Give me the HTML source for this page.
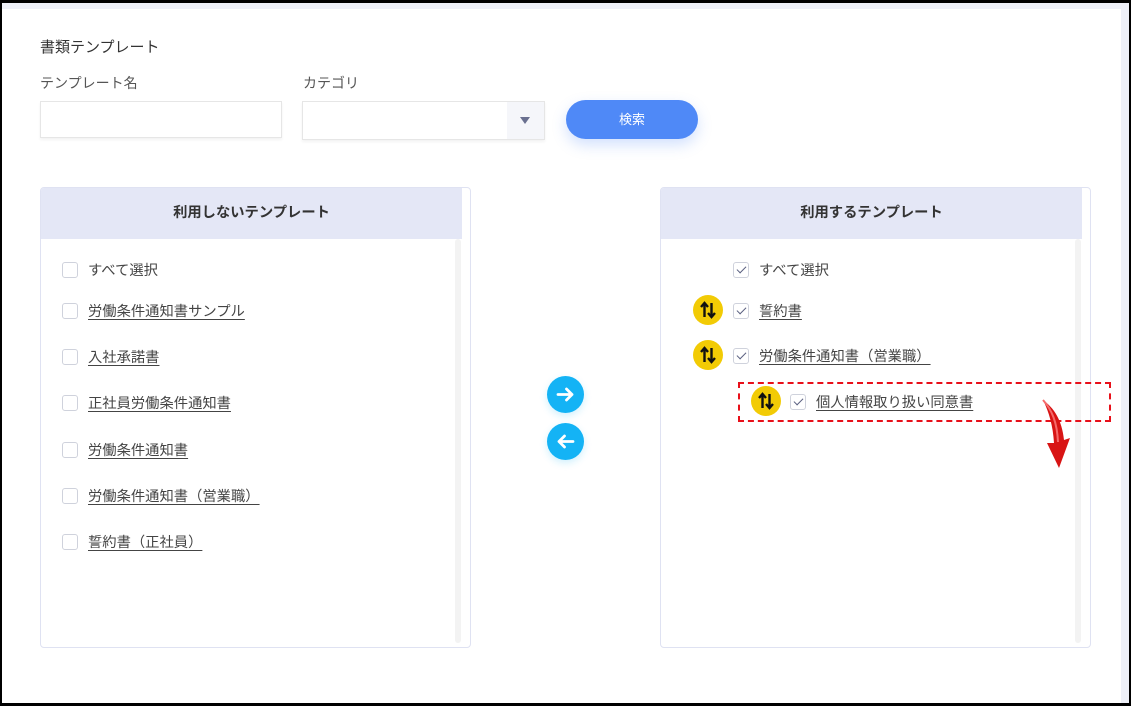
<!DOCTYPE html>
<html><head><meta charset="utf-8"><style>
*{margin:0;padding:0;box-sizing:border-box}
body{width:1131px;height:706px;background:#000;position:relative;overflow:hidden;font-family:"Liberation Sans","Noto Sans CJK JP",sans-serif;color:#333}
.frame{position:absolute;left:2px;top:3px;width:1127px;height:700px;background:#eef0f8}
.main{position:absolute;left:2px;top:9px;width:1119px;height:694px;background:#fff}
.abs{position:absolute}
.t{font-size:15px;color:#333}
.lbl{font-size:14px;color:#555}
.inp{position:absolute;border:1px solid #e6e6e6;background:#fff;box-shadow:0 2px 3px rgba(0,0,0,.05)}
.panel{position:absolute;top:187px;width:431px;height:461px;border:1px solid #dfe2f2;border-radius:4px;background:#fff;overflow:hidden}
.ph{height:51px;background:#e4e7f6;text-align:center;line-height:51px;font-size:14.3px;font-weight:bold;color:#333;width:421px}
.sb{position:absolute;right:9px;top:51px;width:6px;height:404px;background:#f3f3f3;border-radius:3px}
.row{position:absolute;font-size:14.3px;color:#444;display:flex;align-items:center}
.cb{width:16px;height:16px;border:1px solid #cfd2dc;border-radius:3px;margin-right:10px;background:#fff;position:relative}
.cb.c::after{content:"";position:absolute;left:4.5px;top:1px;width:4px;height:8px;border:solid #5a6080;border-width:0 1.6px 1.6px 0;transform:rotate(45deg)}
.u{text-decoration:underline;text-underline-offset:3px}
.ico{position:absolute;width:30px;height:30px;border-radius:50%;background:#f2cb05;display:flex;align-items:center;justify-content:center}
.circ{position:absolute;width:37px;height:37px;border-radius:50%;background:#14b3f5;box-shadow:0 3px 8px rgba(20,179,245,.2)}
</style></head><body>
<div class="frame"></div>
<div class="main"></div>
<div class="abs t" style="left:40px;top:36px">書類テンプレート</div>
<div class="abs lbl" style="left:40px;top:73px">テンプレート名</div>
<div class="abs lbl" style="left:303px;top:73px">カテゴリ</div>
<div class="inp" style="left:40px;top:101px;width:242px;height:37px"></div>
<div class="inp" style="left:302px;top:101px;width:243px;height:39px"></div>
<div class="abs" style="left:507px;top:102px;width:37px;height:37px;background:#f5f6fa"></div>
<div class="abs" style="left:520px;top:117px;width:0;height:0;border-left:5px solid transparent;border-right:5px solid transparent;border-top:7px solid #6a7090"></div>
<div class="abs" style="left:566px;top:100px;width:132px;height:39px;border-radius:20px;background:#4f89f7;color:#fff;font-size:13px;text-align:center;line-height:39px;box-shadow:0 6px 14px rgba(79,137,247,.25)">検索</div>

<div class="panel" style="left:40px"><div class="ph">利用しないテンプレート</div><div class="sb"></div></div>
<div class="panel" style="left:660px"><div class="ph">利用するテンプレート</div><div class="sb"></div></div>

<div class="row" style="left:62px;top:259px"><span class="cb"></span>すべて選択</div>
<div class="row" style="left:62px;top:300px"><span class="cb"></span><span class="u">労働条件通知書サンプル</span></div>
<div class="row" style="left:62px;top:346px"><span class="cb"></span><span class="u">入社承諾書</span></div>
<div class="row" style="left:62px;top:392px"><span class="cb"></span><span class="u">正社員労働条件通知書</span></div>
<div class="row" style="left:62px;top:439px"><span class="cb"></span><span class="u">労働条件通知書</span></div>
<div class="row" style="left:62px;top:485px"><span class="cb"></span><span class="u">労働条件通知書（営業職）</span></div>
<div class="row" style="left:62px;top:531px"><span class="cb"></span><span class="u">誓約書（正社員）</span></div>

<div class="circ" style="left:547px;top:376px"><svg width="37" height="37" viewBox="0 0 37 37"><path d="M11 18.5h14M19.5 13l5.5 5.5-5.5 5.5" stroke="#fff" stroke-width="2.8" fill="none" stroke-linecap="round" stroke-linejoin="round"/></svg></div>
<div class="circ" style="left:547px;top:423px"><svg width="37" height="37" viewBox="0 0 37 37"><path d="M26 18.5H12M17.5 13L12 18.5l5.5 5.5" stroke="#fff" stroke-width="2.8" fill="none" stroke-linecap="round" stroke-linejoin="round"/></svg></div>

<div class="row" style="left:733px;top:259px"><span class="cb c"></span>すべて選択</div>
<div class="ico" style="left:693px;top:295px"><svg width="20" height="20" viewBox="0 0 20 20"><path d="M6.5 17V3M3 7l3.5-4 3.5 4M13.5 3v14M10 13l3.5 4 3.5-4" stroke="#111" stroke-width="2.4" fill="none"/></svg></div>
<div class="row" style="left:733px;top:300px"><span class="cb c"></span><span class="u">誓約書</span></div>
<div class="ico" style="left:693px;top:340px"><svg width="20" height="20" viewBox="0 0 20 20"><path d="M6.5 17V3M3 7l3.5-4 3.5 4M13.5 3v14M10 13l3.5 4 3.5-4" stroke="#111" stroke-width="2.4" fill="none"/></svg></div>
<div class="row" style="left:733px;top:345px"><span class="cb c"></span><span class="u">労働条件通知書（営業職）</span></div>
<div class="abs" style="left:738px;top:382px;width:373px;height:40px;border:2px dashed #e8101a"></div>
<div class="ico" style="left:751px;top:386px"><svg width="20" height="20" viewBox="0 0 20 20"><path d="M6.5 17V3M3 7l3.5-4 3.5 4M13.5 3v14M10 13l3.5 4 3.5-4" stroke="#111" stroke-width="2.4" fill="none"/></svg></div>
<div class="row" style="left:790px;top:391px"><span class="cb c"></span><span class="u">個人情報取り扱い同意書</span></div>
<svg class="abs" style="left:1040px;top:398px" width="34" height="72" viewBox="0 0 34 72"><path d="M3 2C14 10 22 22 24 42L30 40 19 70 7 45 14 45C13 28 9 14 3 2Z" fill="#d81414"/><path d="M3 2C12 12 17 24 18 44" stroke="#f56a6a" stroke-width="2" fill="none"/></svg>
</body></html>
